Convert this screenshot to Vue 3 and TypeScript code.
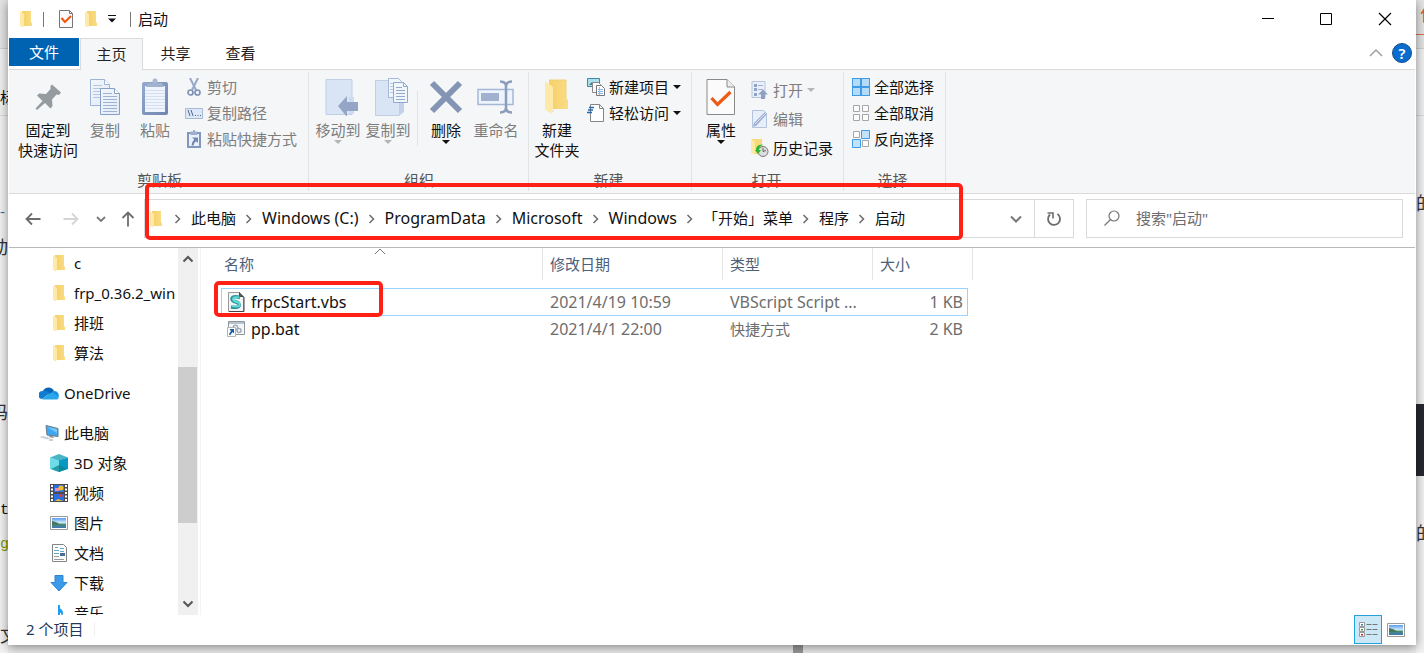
<script setup lang="ts">
import { ref } from 'vue'

interface SmallAction { icon: string; label: string; enabled: boolean; menu?: boolean }
interface Place { icon: string; label: string; level: number; spaced?: boolean }
interface FileRow { icon: string; name: string; date: string; type: string; size: string }
interface Scrap { text: string; y: number; tone?: string }

const tabs = ['主页', '共享', '查看']
const activeTab = ref('主页')
const selected = ref('frpcStart.vbs')
const query = ref('')

const clipboard: SmallAction[] = [
  { icon: 'cut', label: '剪切', enabled: false },
  { icon: 'path', label: '复制路径', enabled: false },
  { icon: 'shortcut', label: '粘贴快捷方式', enabled: false },
]
const creation: SmallAction[] = [
  { icon: 'newitem', label: '新建项目', enabled: true, menu: true },
  { icon: 'easy', label: '轻松访问', enabled: true, menu: true },
]
const opening: SmallAction[] = [
  { icon: 'open', label: '打开', enabled: false, menu: true },
  { icon: 'edit', label: '编辑', enabled: false },
  { icon: 'history', label: '历史记录', enabled: true },
]
const selection: SmallAction[] = [
  { icon: 'all', label: '全部选择', enabled: true },
  { icon: 'none', label: '全部取消', enabled: true },
  { icon: 'invert', label: '反向选择', enabled: true },
]
const crumbs = ['此电脑', 'Windows (C:)', 'ProgramData', 'Microsoft', 'Windows', '「开始」菜单', '程序', '启动']

const places: Place[] = [
  { icon: 'folder', label: 'c', level: 2 },
  { icon: 'folder', label: 'frp_0.36.2_win', level: 2 },
  { icon: 'folder', label: '排班', level: 2 },
  { icon: 'folder', label: '算法', level: 2 },
  { icon: 'cloud', label: 'OneDrive', level: 1, spaced: true },
  { icon: 'pc', label: '此电脑', level: 1, spaced: true },
  { icon: 'cube', label: '3D 对象', level: 2 },
  { icon: 'video', label: '视频', level: 2 },
  { icon: 'picture', label: '图片', level: 2 },
  { icon: 'document', label: '文档', level: 2 },
  { icon: 'download', label: '下载', level: 2 },
  { icon: 'music', label: '音乐', level: 2 },
]
const files: FileRow[] = [
  { icon: 'vbs', name: 'frpcStart.vbs', date: '2021/4/19 10:59', type: 'VBScript Script ...', size: '1 KB' },
  { icon: 'bat', name: 'pp.bat', date: '2021/4/1 22:00', type: '快捷方式', size: '2 KB' },
]
const leftScraps: Scrap[] = [
  { text: '标', y: 87 },
  { text: '-', y: 201, tone: 'blue' },
  { text: '动', y: 237, tone: 'large' },
  { text: '码', y: 402, tone: 'large' },
  { text: 't', y: 501, tone: 'code' },
  { text: 'g', y: 535, tone: 'green' },
  { text: '文', y: 625, tone: 'start' },
]
const rightScraps: Scrap[] = [
  { text: '作', y: 4, tone: 'orange' },
  { text: '的', y: 193, tone: 'large' },
  { text: '的', y: 523, tone: 'large' },
]

const isLatin = (text: string): boolean => /^[\x20-\x7e]+$/.test(text)
</script>

<template>
  <div class="desktop">
    <svg class="sprite" aria-hidden="true">
      <defs>
        <linearGradient id="gFold" x1="0" x2="1"><stop offset="0" stop-color="#f5d069" /><stop offset="1" stop-color="#f9dc85" /></linearGradient>
        <linearGradient id="gPage" x1="0" y1="0" x2="1" y2="1"><stop offset="0" stop-color="#f2f6fc" /><stop offset="1" stop-color="#e3ebf7" /></linearGradient>
        <linearGradient id="gClip" x1="0" y1="0" x2="1" y2="1"><stop offset="0" stop-color="#93a9d0" /><stop offset="1" stop-color="#7186ad" /></linearGradient>
        <linearGradient id="gPic" x1="0" y1="0" x2="0" y2="1"><stop offset="0" stop-color="#5a9bf0" /><stop offset=".5" stop-color="#d6effb" /><stop offset=".6" stop-color="#4b8f6c" /><stop offset="1" stop-color="#3f76b8" /></linearGradient>
      </defs>
      <symbol id="i-folder" viewBox="0 0 18 18">
        <path d="M5 1h9v11l1 1v3H5z" fill="url(#gFold)" />
        <path d="M3 1l4 3v12l-1.500 1.500L3 15.500z" fill="#ffe9a6" />
      </symbol>
      <symbol id="i-pin" viewBox="0 0 26 26">
        <path d="M17 .5L26 8.500 24 11l-2.500-.5L17 15.500 17.500 22 15.500 24.500 10 19 2 26 .5 24.500 7.500 17 2 11.500 4 9.500l7 .5L15.500 5V2z" fill="#959ca0" />
      </symbol>
      <symbol id="i-copy" viewBox="0 0 30 38">
        <g fill="url(#gPage)" stroke="#9eb3d5">
          <path d="M.5 1.500h14l5 5v21H.5z" /><path d="M14.500 1.500v5h5" fill="#fff" />
          <path d="M3 7.500h9M3 10.500h9M3 13.500h7M3 16.500h7M3 19.500h7" stroke="#b5c6e1" />
          <path d="M10.500 10.500h14l5 5v21h-19z" stroke="#879ec7" /><path d="M24.500 10.500v5h5" fill="#fff" stroke="#879ec7" />
          <path d="M13 15.500h9M13 18.500h14M13 21.500h14M13 24.500h14M13 27.500h14M13 30.500h14M13 33.500h14" stroke="#9fb2d2" />
        </g>
      </symbol>
      <symbol id="i-paste" viewBox="0 0 28 38">
        <rect x="1" y="4" width="26" height="33" rx="2" fill="url(#gClip)" /><rect x="4" y="8" width="20" height="26" fill="#f0f5fd" />
        <path d="M4 12.500h20M4 15.500h20M4 18.500h20M4 21.500h20M4 24.500h20M4 27.500h20M4 30.500h20" stroke="#d4dff0" />
        <circle cx="14" cy="3" r="2.500" fill="#a9b9d4" /><path d="M7 5h14l2 4H5z" fill="#a1b2cf" />
      </symbol>
      <symbol id="i-moveto" viewBox="0 0 34 38">
        <path d="M1 1.500h26v35H1z" fill="#d9e4f4" stroke="#c1cfe5" /><path d="M24 19h5v17h-5z" fill="#cddbf0" />
        <path d="M13 28L22 18v6h11v9H22v6z" fill="#95a5c5" />
      </symbol>
      <symbol id="i-copyto" viewBox="0 0 34 38">
        <path d="M.5 2.500h24v35h-24z" fill="#d9e4f4" stroke="#c1cfe5" /><path d="M25 25l4-3v12l-4 3z" fill="#c3d2ea" />
        <path d="M13.500.5h10l3 3v16h-13z" fill="#f1f6fd" stroke="#a5b8d8" /><path d="M15 5.500h3M15 8.500h3M15 11.500h3M15 14.500h3" stroke="#b8c8e2" />
        <path d="M18.500 4.500h10l4 4v16h-14z" fill="#f1f6fd" stroke="#91a8cf" /><path d="M28.500 4.500v4h4M21 9.500h6M21 12.500h9M21 15.500h9M21 18.500h9M21 21.500h9" fill="none" stroke="#91a8cf" />
      </symbol>
      <symbol id="i-delete" viewBox="0 0 34 34"><path d="M3 3L31 31M31 3L3 31" stroke="#8394b5" stroke-width="6" /></symbol>
      <symbol id="i-rename" viewBox="0 0 38 34">
        <path d="M1 9.500h35v15H1z" fill="#eef4fc" stroke="#a4b7d7" stroke-width="1.500" /><path d="M4 13h18v8H4z" fill="#a2b2ce" />
        <path d="M23 1.500q6 0 6 5v21q0 5-6 5M35 1.500q-6 0-6 5v21q0 5 6 5" fill="none" stroke="#8b9cbc" stroke-width="2.500" />
      </symbol>
      <symbol id="i-bigfolder" viewBox="0 0 26 38">
        <path d="M5 2h17v18l2 2v9H5z" fill="url(#gFold)" /><path d="M1 3l8 6v22l-2 5-6-5z" fill="#ffe9a8" />
        <path d="M5 2h17v18" fill="none" stroke="#efd07a" /><path d="M8 34l2-2" stroke="#ddd" />
      </symbol>
      <symbol id="i-props" viewBox="0 0 30 38">
        <path d="M1 1.500h20l7.500 7.500v27.500H1z" fill="#fbfbfb" stroke="#8a8a8a" /><path d="M21 1.500v7.500h7.500" fill="#eee" stroke="#8a8a8a" />
        <path d="M5.500 20l6 6.500L24.500 14" fill="none" stroke="#ee5a13" stroke-width="3.200" />
      </symbol>
      <symbol id="i-check" viewBox="0 0 18 20">
        <path d="M2.500 1.500h10l3 3v14h-13z" fill="#fafafa" stroke="#777" /><path d="M12.500 1.500v3h3" fill="none" stroke="#777" />
        <path d="M4.500 9l3.500 4 6-6" fill="none" stroke="#ee5a13" stroke-width="2.200" />
      </symbol>
      <symbol id="i-cut" viewBox="0 0 18 18">
        <path d="M5 0l6 12M13 0L7 12" stroke="#98a9c8" stroke-width="2" /><circle cx="5.500" cy="14.500" r="2.500" fill="none" stroke="#7e92b8" stroke-width="1.700" /><circle cx="12.500" cy="14.500" r="2.500" fill="none" stroke="#7e92b8" stroke-width="1.700" />
      </symbol>
      <symbol id="i-path" viewBox="0 0 18 18">
        <path d="M.5 4.500h17v10H.5z" fill="#dce7f7" stroke="#a9b9d5" /><path d="M3 6l2 6M6 6l2 6M10 11.500h1M12.500 11.500h1M15 11.500h1" stroke="#506891" />
      </symbol>
      <symbol id="i-shortcut" viewBox="0 0 18 18">
        <path d="M3 3h12v14H3z" fill="#eaf1fb" stroke="#8297bd" stroke-width="2" /><path d="M8 0h2v1.500h2.500V5h-7V1.500H8z" fill="#9db0d0" /><path d="M7 7.500h6V13l-2-1.800q-2 1.300-2.500 4.300h-2q0-3.500 2.700-6z" fill="#7188b3" />
      </symbol>
      <symbol id="i-newitem" viewBox="0 0 18 18">
        <path d="M.5.5h12v8H.5z" fill="#a9dfee" stroke="#3a8aa5" /><path d="M2 7l3-3 4 3" fill="#4c7e72" />
        <path d="M5.500 4.500h6l2 2v8h-8z" fill="#fafafa" stroke="#888" /><path d="M9.500 7.500h5l3 3v7h-8z" fill="#fff" stroke="#777" /><path d="M11 11.500h5M11 13.500h5M11 15.500h5" stroke="#85b1e5" /><path d="M12.500 9v8" stroke="#ef9c9c" />
      </symbol>
      <symbol id="i-easy" viewBox="0 0 18 18">
        <path d="M3.500.5h9l4 4v13h-13z" fill="#fff" stroke="#868686" /><path d="M12.500.5v4h4" fill="none" stroke="#868686" /><path d="M2 3.500h5M1 6h5M0 8.500h5" stroke="#2069ad" stroke-width="1.500" />
      </symbol>
      <symbol id="i-open" viewBox="0 0 18 18">
        <path d="M1 .5h13v16H1z" fill="#e9f0fa" stroke="#b6c4dc" /><path d="M3 3h3v3H3zM3 7h3v3H3zM3 12h3v3H3z" fill="#8fa3c6" /><path d="M7 4.500h5M7 8.500h5" stroke="#9fb1cf" /><path d="M12 8.500l5 5h-3V18h-4v-4.500H7z" fill="#8fa1c3" />
      </symbol>
      <symbol id="i-edit" viewBox="0 0 18 18">
        <path d="M1.500.5h11l3 3v14h-14z" fill="#e7effa" stroke="#b3c3dd" /><path d="M2 16.500l3-.5L16 4l-2-2L3 13z" fill="#9db0d1" /><path d="M4 14L15 3" stroke="#d5e0f2" />
      </symbol>
      <symbol id="i-history" viewBox="0 0 18 18">
        <path d="M1 0h10v15H3z" fill="#f8da7e" /><path d="M0 0l4 3v13l-4-2z" fill="#ffe9a4" /><circle cx="12" cy="12.500" r="5" fill="#ddd" stroke="#777" /><path d="M12 9v3.500l3-1" fill="none" stroke="#666" /><path d="M5 11c0-5 4-6 8-5-4 0-5 3-5 5h2l-3 4-3-4z" fill="#27b82e" />
      </symbol>
      <symbol id="i-all" viewBox="0 0 18 18"><path d="M0 0h18v18H0z" fill="#3d9be8" /><path d="M1 1h7v7H1zM10 1h7v7h-7zM1 10h7v7H1zM10 10h7v7h-7z" fill="#b4dcf8" /></symbol>
      <symbol id="i-none" viewBox="0 0 18 18"><path d="M1.500 1.500h6v6h-6zM10.500 1.500h6v6h-6zM1.500 10.500h6v6h-6zM10.500 10.500h6v6h-6z" fill="#fcfcfc" stroke="#a6a6a6" /></symbol>
      <symbol id="i-invert" viewBox="0 0 18 18"><path d="M1.500 1.500h6v6h-6zM10.500 10.500h6v6h-6z" fill="#fcfcfc" stroke="#a6a6a6" /><path d="M9.500.5h8v8h-8zM.5 9.500h8v8h-8z" fill="#c0e2fa" stroke="#3d9be8" /></symbol>
      <symbol id="i-cloud" viewBox="0 0 20 18">
        <path d="M4 7a6 6 0 0 1 11 0l-5 4z" fill="#0a64b8" /><path d="M4 7q4-1 7 2l-8 6a4 4 0 0 1 1-8z" fill="#0f7bd2" /><path d="M15 7a4.500 4.500 0 0 1 4 7q-3-1-7-5z" fill="#1491e0" /><path d="M3 15l7.500-5.500q4-2 9 3.500a2 2 0 0 1-2 2.500H4z" fill="#28a8ea" />
      </symbol>
      <symbol id="i-pc" viewBox="0 0 20 18">
        <path d="M7 1.500l12 3v8L8 11z" fill="#3ea8f2" stroke="#66798a" /><path d="M8 3l10 6V5z" fill="#77c6fa" /><path d="M10 12h4l1 2-4-.5z" fill="#999" /><path d="M0 13l4-1 8 2-4 1.500z" fill="#cfd3d6" /><path d="M9 16l3-1 3 1-3 1z" fill="#b9bdc0" />
      </symbol>
      <symbol id="i-cube" viewBox="0 0 18 18"><path d="M0 3.500L9 6v12L0 15z" fill="#6fdbe6" /><path d="M18 3.500L9 6v12l9-3z" fill="#0798c4" /><path d="M0 3.500L9 0l9 3.500L9 6.500z" fill="#4bb3c6" /><path d="M1 15l8-4 8 4-8 3z" fill="#08828f" opacity=".7" /></symbol>
      <symbol id="i-video" viewBox="0 0 18 18"><path d="M0 0h18v18H0z" fill="#4b4b4b" /><path d="M4 1h10v7H4zM4 10h10v7H4z" fill="#2d6ee0" /><path d="M5 4h4v3H5z" fill="#f08ca8" /><circle cx="11" cy="4" r="2.500" fill="#efc02c" /><circle cx="11" cy="11.500" r="1.500" fill="#e13b2a" /><path d="M5 17l3-2 5 2z" fill="#e8c138" /><path d="M2 1v16M16 1v16" stroke="#fff" stroke-width="2" stroke-dasharray="2 1.500" /></symbol>
      <symbol id="i-picture" viewBox="0 0 18 18"><path d="M.5 2.500h17v13H.5z" fill="#fff" stroke="#9a9a9a" /><path d="M2 4h14v10H2z" fill="url(#gPic)" /><path d="M2 7q6 1 8 4H2z" fill="#46785d" /></symbol>
      <symbol id="i-document" viewBox="0 0 18 18"><path d="M2.500.5h11l3 3v14h-14z" fill="#fff" stroke="#858585" /><path d="M5 3.500h3M4 6.500h5M10 4.500h4M10 7.500h4M4 9.500h5" stroke="#62a9d3" /><path d="M4 12.500h5M4 15.500h10" stroke="#999" /><path d="M10 9h5v3h-5z" fill="#466f9b" /></symbol>
      <symbol id="i-download" viewBox="0 0 18 18"><path d="M5 1.500h8v7h4L9 17 1 8.500h4z" fill="#3b9bea" stroke="#2f84cc" /></symbol>
      <symbol id="i-music" viewBox="0 0 18 18"><path d="M8.500 14V1q.5 3 3 4.500 3 3 0 7.500 1-4-3-5.500" fill="#1e9df0" /><path d="M8 1h2v13.500H8z" fill="#1e9df0" /><ellipse cx="6.500" cy="15" rx="3" ry="2.500" fill="#1e9df0" /></symbol>
      <symbol id="i-vbs" viewBox="0 0 18 20"><path d="M1.500.5h11l4 4v15h-15z" fill="#f4f4f4" stroke="#999" /><path d="M12.500.5v4h4" fill="#555" stroke="#444" /><path d="M17 5v14.500H2" fill="none" stroke="#444" /><path d="M13 5.500Q5 3.500 5 7q0 2 4 3t3 4q-1 2-8 1" fill="none" stroke="#2a9496" stroke-width="3.500" /><path d="M12 5.500Q6 4.500 6 7q0 2 4 3t2 4q-1 1-7 0" fill="none" stroke="#62dada" stroke-width="2" /></symbol>
      <symbol id="i-bat" viewBox="0 0 18 18"><path d="M1.500 1.500h16v13h-16z" fill="#f5f7f9" stroke="#8e969d" /><path d="M2 3h15" stroke="#b7c4ce" stroke-width="2" /><g fill="none" stroke="#9fadb8" stroke-width="1.500"><circle cx="8.500" cy="7.500" r="2.200" /><circle cx="12" cy="10.500" r="2" /></g><path d="M.5 7.500h8v9h-8z" fill="#fff" stroke="#b5b5b5" /><path d="M2.500 9H7v4.500L5.500 12 3 15.500 2 14l2-3z" fill="#175aa8" /></symbol>
      <symbol id="i-chev" viewBox="0 0 8 10"><path d="M1.500 1l4 4-4 4" fill="none" stroke="#6b6b6b" stroke-width="1.500" /></symbol>
      <symbol id="i-down" viewBox="0 0 12 12"><path d="M1 3.500l5 5 5-5" fill="none" stroke="currentColor" stroke-width="2" /></symbol>
    </svg>

    <div class="backdrop left" aria-hidden="true">
      <span v-for="s in leftScraps" :key="s.y" :class="s.tone" :style="{ top: s.y + 'px' }">{{ s.text }}</span>
    </div>
    <div class="backdrop right" aria-hidden="true">
      <i class="underline"></i><i class="block"></i>
      <span v-for="s in rightScraps" :key="s.y" :class="s.tone" :style="{ top: s.y + 'px' }">{{ s.text }}</span>
    </div>
    <i class="pagebar"></i>

    <main class="window">
      <header class="titlebar">
        <svg class="ic"><use href="#i-folder" /></svg>
        <i class="tick"></i>
        <button class="quick" aria-label="属性"><svg class="ic tall"><use href="#i-check" /></svg></button>
        <button class="quick" aria-label="新建文件夹"><svg class="ic"><use href="#i-folder" /></svg></button>
        <button class="quick more" aria-label="自定义快速访问工具栏"><svg width="8" height="8"><path d="M0 .5h8" stroke="#111" /><path d="M0 3.500h8L4 7.500z" fill="#111" /></svg></button>
        <i class="tick"></i>
        <h1>启动</h1>
        <div class="controls">
          <button aria-label="最小化"><svg width="14" height="14"><path d="M0 6.500h12" stroke="#000" /></svg></button>
          <button aria-label="最大化"><svg width="14" height="14"><path d="M.5 1.500h11v11H.5z" fill="none" stroke="#000" /></svg></button>
          <button aria-label="关闭"><svg width="14" height="14"><path d="M1 1l12 12M13 1L1 13" stroke="#000" stroke-width="1.200" /></svg></button>
        </div>
      </header>

      <nav class="tabs">
        <button class="file">文件</button>
        <button v-for="t in tabs" :key="t" class="tab" :class="{ active: t === activeTab }" @click="activeTab = t">{{ t }}</button>
        <div class="tabtools">
          <button aria-label="最小化功能区"><svg width="14" height="10"><path d="M1 8l6-6 6 6" fill="none" stroke="#a0a0a0" stroke-width="1.500" /></svg></button>
          <button class="help" aria-label="帮助">?</button>
        </div>
      </nav>

      <section class="ribbon">
        <div class="group g1">
          <div class="tools">
            <button class="big wide"><span class="art"><svg width="26" height="26"><use href="#i-pin" /></svg></span>固定到<br>快速访问</button>
            <button class="big off"><span class="art"><svg width="30" height="38"><use href="#i-copy" /></svg></span>复制</button>
            <button class="big off"><span class="art"><svg width="28" height="38"><use href="#i-paste" /></svg></span>粘贴</button>
            <div class="stack">
              <button v-for="a in clipboard" :key="a.label" class="small" :class="{ off: !a.enabled }"><svg class="ic"><use :href="'#i-' + a.icon" /></svg>{{ a.label }}</button>
            </div>
          </div>
          <h2>剪贴板</h2>
        </div>
        <div class="group g2">
          <div class="tools">
            <button class="big off"><span class="art lean"><svg width="34" height="38"><use href="#i-moveto" /></svg></span>移动到<i class="caret"></i></button>
            <button class="big off"><span class="art lean"><svg width="34" height="38"><use href="#i-copyto" /></svg></span>复制到<i class="caret"></i></button>
            <i class="divider"></i>
            <button class="big"><span class="art"><svg width="34" height="34"><use href="#i-delete" /></svg></span>删除<i class="caret"></i></button>
            <button class="big off"><span class="art"><svg width="38" height="34"><use href="#i-rename" /></svg></span>重命名</button>
          </div>
          <h2>组织</h2>
        </div>
        <div class="group g3">
          <div class="tools">
            <button class="big"><span class="art"><svg width="26" height="38"><use href="#i-bigfolder" /></svg></span>新建<br>文件夹</button>
            <div class="stack">
              <button v-for="a in creation" :key="a.label" class="small"><svg class="ic"><use :href="'#i-' + a.icon" /></svg>{{ a.label }}<i class="caret"></i></button>
            </div>
          </div>
          <h2>新建</h2>
        </div>
        <div class="group g4">
          <div class="tools">
            <button class="big"><span class="art"><svg width="30" height="38"><use href="#i-props" /></svg></span>属性<i class="caret"></i></button>
            <div class="stack loose">
              <button v-for="a in opening" :key="a.label" class="small" :class="{ off: !a.enabled }"><svg class="ic"><use :href="'#i-' + a.icon" /></svg>{{ a.label }}<i v-if="a.menu" class="caret"></i></button>
            </div>
          </div>
          <h2>打开</h2>
        </div>
        <div class="group g5">
          <div class="tools">
            <div class="stack">
              <button v-for="a in selection" :key="a.label" class="small"><svg class="ic"><use :href="'#i-' + a.icon" /></svg>{{ a.label }}</button>
            </div>
          </div>
          <h2>选择</h2>
        </div>
      </section>

      <section class="navigate">
        <div class="arrows">
          <button aria-label="后退"><svg width="16" height="14"><path d="M15.500 7H1.500M7 1.500L1.500 7 7 12.500" fill="none" stroke="#6c6c6c" stroke-width="1.800" /></svg></button>
          <button class="forward" aria-label="前进"><svg width="16" height="14"><path d="M.5 7h14M9 1.500L14.500 7 9 12.500" fill="none" stroke="#d5d5d5" stroke-width="1.800" /></svg></button>
          <button class="recent" aria-label="最近浏览的位置"><svg width="10" height="10"><path d="M1 3l4 4 4-4" fill="none" stroke="#7a7a7a" stroke-width="1.800" /></svg></button>
          <button aria-label="上移"><svg width="14" height="16"><path d="M7 15.500V1.500M1.500 7L7 1.500 12.500 7" fill="none" stroke="#6c6c6c" stroke-width="1.800" /></svg></button>
        </div>
        <div class="address">
          <svg class="ic"><use href="#i-folder" /></svg>
          <template v-for="c in crumbs" :key="c">
            <svg class="chev"><use href="#i-chev" /></svg>
            <button class="crumb" :class="{ latin: isLatin(c) }">{{ c }}</button>
          </template>
          <button class="expand" aria-label="以前的位置"><svg width="12" height="12"><use href="#i-down" /></svg></button>
          <button class="refresh" aria-label="刷新"><svg width="16" height="16"><path d="M11.500 3A6 6 0 1 1 4 3.500" fill="none" stroke="#6c6c6c" stroke-width="1.800" /><path d="M1.500 2H7v5.500" fill="none" stroke="#6c6c6c" stroke-width="1.600" /></svg></button>
          <i class="mark path"></i>
        </div>
        <label class="search">
          <svg width="16" height="16"><circle cx="10" cy="6" r="5" fill="none" stroke="#777" stroke-width="1.200" /><path d="M6.500 9.500L.5 15.500" stroke="#777" stroke-width="1.200" /></svg>
          <input v-model="query" type="text" aria-label="搜索" placeholder="搜索&quot;启动&quot;">
        </label>
      </section>

      <section class="body">
        <aside class="tree">
          <ul>
            <li v-for="p in places" :key="p.label" :class="['l' + p.level, { spaced: p.spaced }]"><a href="#"><svg class="ic"><use :href="'#i-' + p.icon" /></svg>{{ p.label }}</a></li>
          </ul>
          <div class="scroll">
            <svg width="12" height="12"><path d="M1.500 8.500L6 4l4.500 4.500" fill="none" stroke="#555" stroke-width="2" /></svg>
            <div class="track"><i></i></div>
            <svg width="12" height="12"><path d="M1.500 3.500L6 8l4.500-4.500" fill="none" stroke="#555" stroke-width="2" /></svg>
          </div>
        </aside>
        <div class="listing">
          <table>
            <colgroup><col class="c1"><col class="c2"><col class="c3"><col class="c4"></colgroup>
            <thead>
              <tr>
                <th>名称<svg class="sort" width="12" height="7"><path d="M1 6l5-5 5 5" fill="none" stroke="#777" /></svg></th>
                <th>修改日期</th><th>类型</th><th>大小</th>
              </tr>
            </thead>
            <tbody>
              <tr v-for="f in files" :key="f.name" :class="{ picked: f.name === selected }" @click="selected = f.name">
                <td class="latin"><span class="name"><svg class="ic tall"><use :href="'#i-' + f.icon" /></svg>{{ f.name }}</span></td>
                <td class="latin">{{ f.date }}</td>
                <td :class="{ latin: isLatin(f.type) }">{{ f.type }}</td>
                <td class="latin">{{ f.size }}</td>
              </tr>
            </tbody>
          </table>
          <i class="mark row"></i>
        </div>
      </section>

      <footer class="status">
        <span>2 个项目</span>
        <div class="views">
          <button class="on" aria-label="详细信息"><svg width="20" height="18"><g fill="#fff" stroke="#999"><path d="M1.500 1.500h5v4h-5zM1.500 6.500h5v4h-5zM1.500 11.500h5v4h-5z" /></g><path d="M3 3h2v1.500H3z" fill="#3686a0" /><path d="M3 8h2v1.500H3z" fill="#3e9b57" /><path d="M3 13h2v1.500H3z" fill="#d22" /><path d="M8.500 3.500h5M14.500 3.500h5M8.500 8.500h5M14.500 8.500h5M8.500 13.500h5M14.500 13.500h5" stroke="#777" /></svg></button>
          <button aria-label="大缩略图"><svg class="ic"><use href="#i-picture" /></svg></button>
        </div>
      </footer>
    </main>
  </div>
</template>

<style>
body { background: #ebebeb; }
</style>

<style scoped>
* { box-sizing: border-box; }
.desktop { position: relative; display: flex; min-height: 100vh; padding: 0 8px 8px; overflow: hidden; background: #ebebeb; font: 15px/20px "Noto Sans", "Noto Sans CJK SC", sans-serif; color: #111; }
.sprite { position: absolute; width: 0; height: 0; }
.ic { width: 18px; height: 18px; flex: none; display: block; }
.ic.tall { height: 20px; }
button { border: 0; padding: 0; background: none; font: inherit; color: inherit; }
h1, h2, ul { margin: 0; padding: 0; font: inherit; list-style: none; }
.latin { font-size: 16px; }

.backdrop { position: absolute; top: 0; bottom: 0; width: 8px; overflow: hidden; background: linear-gradient(#e4e4e4 48px, #cfcfcf 48px 49px, #f0f0f0 49px 115px, #d9d9d9 115px 116px, #f2f2f2 116px); }
.left { left: 0; }
.right { right: 0; }
.backdrop span { position: absolute; left: 0; white-space: nowrap; }
.left span.large { left: -10px; }
.backdrop .large, .backdrop .start { font-size: 18px; color: #333; }
.backdrop .blue { color: #2b6cb0; }
.backdrop .green { color: #7a9a00; font-family: "Liberation Mono", monospace; }
.backdrop .code { font-family: "Liberation Mono", monospace; }
.backdrop .orange { color: #e8532f; font-size: 18px; left: 4px; }
.underline { position: absolute; top: 34px; left: 0; width: 8px; height: 1px; background: #e8684e; }
.block { position: absolute; top: 404px; left: 0; width: 8px; height: 72px; background: #252830; }
.pagebar { position: absolute; bottom: 0; left: 793px; width: 10px; height: 8px; background: #999; }

.window { position: relative; flex: 1; min-width: 0; display: flex; flex-direction: column; padding: 0 1px; background: #fff; box-shadow: 0 2px 10px rgba(0, 0, 0, .45); }

.titlebar { display: flex; align-items: center; height: 38px; padding-left: 8px; }
.tick { width: 1px; height: 15px; background: #777; margin: 0 13px 0 8px; }
.titlebar .tick + h1 { margin-left: -6px; }
.quick { display: flex; margin-right: 7px; }
.quick.more { margin: 0 6px 0 1px; }
.controls { display: flex; margin-left: auto; padding-right: 1px; }
.controls button { width: 58px; height: 38px; display: flex; align-items: center; justify-content: center; }

.tabs { display: flex; height: 32px; border-bottom: 1px solid #dadbdc; }
.file { width: 70px; height: 28px; margin-right: 1px; background: #0063b1; color: #fff; }
.tab { width: 65px; height: 31px; padding-bottom: 2px; color: #222; }
.tab.active { width: 63px; height: 32px; border: 1px solid #dadbdc; border-bottom: 0; background: #f5f6f7; }
.tabtools { display: flex; align-items: center; gap: 9px; margin-left: auto; padding: 0 3px 1px 0; }
.tabtools button { display: flex; align-items: center; justify-content: center; }
.tabtools .help { width: 20px; height: 20px; border: 1px solid #14508c; border-radius: 50%; background: #0a6cce; color: #fff; font-weight: 600; }

.ribbon { display: flex; height: 124px; padding: 2px 0; background: #f5f6f7; border-bottom: 1px solid #dadbdc; }
.group { display: flex; flex-direction: column; border-right: 1px solid #e2e3e4; padding-right: 10px; }
.group h2 { text-align: center; color: #555; margin-right: -4px; }
.tools { display: flex; height: 98px; }
.big { width: 50px; padding-top: 5px; line-height: 20px; white-space: nowrap; text-align: center; align-self: flex-start; }
.big.wide { width: 60px; margin-right: 2px; }
.art { display: flex; height: 40px; margin-bottom: 3px; align-items: center; justify-content: center; }
.art.lean { padding-left: 8px; }
.off { color: #7d7d7d; }
.caret { display: block; width: 0; border: 4px solid transparent; border-top-color: #111; border-bottom: 0; margin: 0 auto; }
.off .caret { border-top-color: #b5b5b5; }
.stack { display: flex; flex-direction: column; padding-top: 2px; margin-left: 5px; }
.small { display: flex; align-items: center; gap: 4px; height: 26px; white-space: nowrap; }
.small .caret { margin: 0; }
.loose { padding-top: 3px; }
.loose .small { height: 29px; }
.g1 { padding-left: 9px; padding-right: 11px; }
.g2 { padding-left: 4px; padding-right: 7px; }
.g3 { padding-left: 3px; }
.g4 { padding-left: 4px; }
.g5 { padding-left: 3px; padding-right: 11px; }
.divider { width: 1px; height: 55px; margin: 19px 3px 0 4px; background: #e2e3e4; }

.navigate { display: flex; height: 54px; padding: 5px 12px 9px 0; border-bottom: 1px solid #b9b9b9; }
.arrows { display: flex; align-items: center; width: 135px; padding-left: 16px; }
.arrows button { display: flex; }
.arrows .forward { margin-left: 22px; }
.arrows .recent { margin: 0 15px 0 17px; }
.address { position: relative; flex: 1; min-width: 0; display: flex; align-items: center; border: 1px solid #d9d9d9; padding-left: 2px; }
.address .chev { width: 8px; height: 10px; margin: 0 9px 0 9px; flex: none; }
.crumb { white-space: nowrap; padding-bottom: 2px; }
.expand { margin-left: auto; width: 36px; color: #777; display: flex; justify-content: center; }
.refresh { width: 39px; align-self: stretch; border-left: 1px solid #d9d9d9; display: flex; align-items: center; justify-content: center; }
.search { display: flex; align-items: center; width: 317px; margin-left: 12px; padding: 0 0 2px 17px; gap: 16px; border: 1px solid #d9d9d9; }
.search input { flex: 1; min-width: 0; border: 0; outline: 0; padding: 0; background: none; font: inherit; }
.search input::placeholder { color: #6d6d6d; opacity: 1; }
.mark { position: absolute; border: 4px solid #ff2116; border-radius: 5px; pointer-events: none; z-index: 2; }
.mark.path { left: 0; top: -17px; width: 818px; height: 57px; }
.mark.row { left: 13px; top: 33px; width: 169px; height: 36px; }

.body { flex: 1; display: flex; min-height: 0; height: 367px; }
.tree { display: flex; width: 192px; border-right: 1px solid #f3f3f3; padding-right: 2px; }
.tree ul { flex: 1; min-width: 0; height: 367px; overflow: hidden; }
.tree li { height: 30px; overflow: hidden; }
.tree a { display: flex; align-items: center; gap: 6px; height: 30px; white-space: nowrap; color: #111; text-decoration: none; }
.l1 { padding-left: 30px; }
.l1 .ic { width: 20px; }
.tree .l1 a { gap: 5px; }
.l2 { padding-left: 41px; }
.spaced { margin-top: 10px; }
.scroll { width: 20px; background: #f0f0f0; display: flex; flex-direction: column; align-items: center; padding: 5px 0; }
.track { flex: 1; align-self: stretch; display: flex; flex-direction: column; padding-top: 102px; }
.track i { width: 19px; height: 156px; background: #cdcdcd; }

.listing { position: relative; flex: 1; min-width: 0; padding-left: 20px; }
table { table-layout: fixed; width: 752px; border-collapse: separate; border-spacing: 0; }
.c1 { width: 322px; }
.c2 { width: 180px; }
.c3 { width: 150px; }
.c4 { width: 100px; }
th { position: relative; height: 32px; padding: 0 0 0 7px; border-right: 1px solid #e5e5e5; text-align: left; font-weight: normal; color: #4c607a; }
th:first-child { padding-left: 3px; }
.sort { position: absolute; left: 153px; top: 0; }
tbody::before { content: ""; display: block; height: 8px; }
tbody tr { position: relative; height: 26px; }
tbody tr.picked { height: 28px; }
.picked::after { content: ""; position: absolute; inset: 0 5px 0 0; border: 1px solid #99d1ff; }
td { padding: 0 0 0 7px; color: #6d6d6d; white-space: nowrap; }
td:first-child { color: #111; padding-left: 6px; }
td:last-child { text-align: right; padding-right: 10px; }
.name { display: flex; align-items: center; gap: 6px; }

.status { display: flex; align-items: center; height: 30px; padding-left: 17px; color: #1e395b; }
.status span { padding-right: 11px; margin-bottom: 2px; border-right: 1px solid #f0f0f0; line-height: 14px; }
.views { display: flex; gap: 5px; margin-left: auto; padding: 0 10px 1px 0; }
.views button { height: 29px; display: flex; align-items: center; justify-content: center; }
.views .on { width: 28px; background: #cce8f6; border: 1px solid #26a0da; }
</style>
